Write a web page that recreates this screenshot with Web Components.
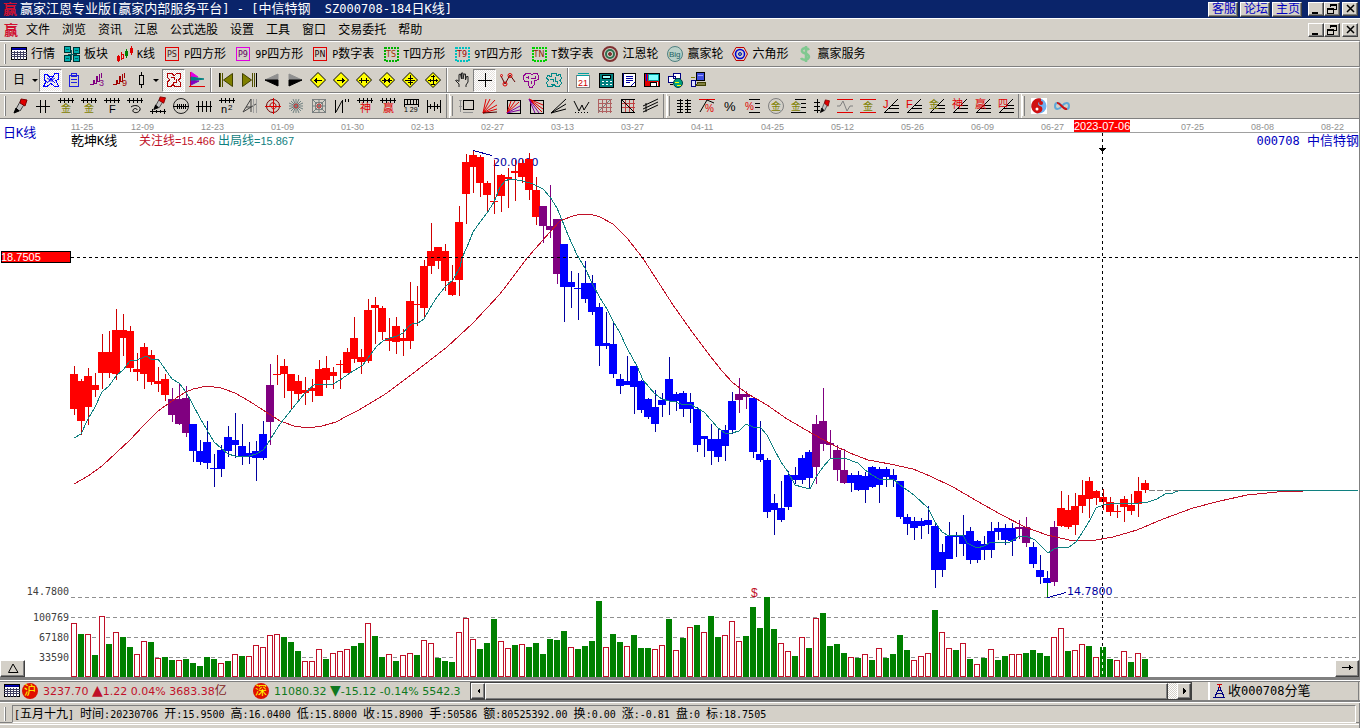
<!DOCTYPE html>
<html lang="zh-CN">
<head>
<meta charset="utf-8">
<title>赢家江恩专业版</title>
<style>
  body {
    margin: 0;
    background: #d4d0c8;
    font: 12px/14px "Liberation Sans", "Noto Sans CJK SC", sans-serif;
  }
</style>
</head>
<body>
<gann-app></gann-app>

<script>
// shared rules, every shadow root pulls these in
const base = `
  * { box-sizing: border-box; }
  i { font: 10px/14px "DejaVu Sans Mono", monospace; white-space: pre; }
  button, a { font: inherit; color: inherit; padding: 0; cursor: default; text-decoration: none; }
  svg { display: block; fill: none; stroke: #000; shape-rendering: crispEdges; overflow: visible; }
  svg text { stroke: none; fill: #000; }
  .raised {
    background: #d4d0c8;
    border: 1px solid;
    border-color: #fff #404040 #404040 #fff;
    box-shadow: inset -1px -1px #808080;
  }
`;

// latin characters take half the width of a chinese one
const half = (text) => text.replace(/[\x20-\x7e]+/g, (run) => `<i>${run}</i>`);

const p = (d, color = '#000', fill = 'none') => `<path d="${d}" stroke="${color}" fill="${fill}"/>`;
const t = (x, y, size, text, color = '#000') => `<text x="${x}" y="${y}" font-size="${size}" style="fill:${color}">${text}</text>`;
const soft = (inner) => `<g shape-rendering="geometricPrecision">${inner}</g>`;

const comb = p('M0 2.5H16M2.5 0V5M6.5 0V5M10.5 0V5M14.5 0V5');
const tag = (text, border, color, dots = '') =>
  `<rect x="1.5" y="1.5" width="13" height="13" stroke="${border}" stroke-width="${dots ? 2 : 1}" stroke-dasharray="${dots}"/>` +
  `<text x="8" y="11" text-anchor="middle" font-family="DejaVu Sans" font-size="8" style="fill:${color}">${text}</text>`;
const diamond = (arrows) => soft(p('M8 .5L15.5 8L8 15.5L.5 8Z', '#000', '#ff0')) + p(arrows);
const fan = p('M1 14.5H16M6 10.5H16M9 7.5H16') + soft(p('M1 15L15 1'));
const pen = soft(p('M4 11L9 2L13 5L8 13Z', '#404040', '#c0c0c0') + p('M9 1L15 2L13 8L8 5Z', '#800000', '#e00000') + p('M4 10L2 15L7 13Z', '#000', '#000'));
const zigzag = (color, digit) => p('M1 12.5H4.5V8.5H5.5V11.5H7.5V4.5H8.5V9.5H10.5V1.5', color) + p('M12.5 1V6', color) + t(10, 14, 9, digit, color);

const icons = {
  table: p('M.5 1.5H15.5V13.5H.5Z', '#000', '#fff') + p('M1 3H15', '#000080') + p('M1 2H15', '#0000c0') + p('M0 6.5H16M0 8.5H16M0 10.5H16M3.5 5V14M6.5 5V14M9.5 5V14M12.5 5V14', '#404060'),
  blocks: p('M.5 .5H6.5V6.5H.5ZM9.5 1.5H15.5V7.5H9.5ZM.5 9.5H6.5V15.5H.5ZM9.5 9.5H15.5V15.5H9.5Z', '#003030', '#00b0b0') + p('M2 3.5H5M11 4.5H14M2 12.5H5M11 12.5H14M7.5 4V14M4 8H13', '#006060'),
  kline: p('M1.5 9V16M4.5 6V14', '#e00000') + p('M.5 10.5H2.5V14.5H.5ZM4.5 8.5H6.5V12.5H4.5Z', '#e00000') + p('M9.5 3V12M8.5 5.5H10.5V9.5H8.5Z', '#008000', '#0a0') + p('M14.5 0V9M13.5 2.5H15.5V6.5H13.5Z', '#e00000'),
  ps: tag('PS', '#e00000', '#402020'),
  p9: tag('P9', '#e000e0', '#600060'),
  pn: tag('PN', '#e00000', '#200000'),
  ts: tag('TS', '#00b000', '#a03000', '2 1'),
  t9: tag('T9', '#00c0c0', '#a00000', '2 1'),
  tn: tag('TN', '#00d000', '#902000', '2 1'),
  rings: soft('<circle cx="8" cy="8" r="7" stroke="#803030" stroke-width="2"/><circle cx="8" cy="8" r="4" stroke="#307050" stroke-width="2"/><circle cx="8" cy="8" r="1.5" stroke="#803030" fill="#803030"/>'),
  big: soft('<circle cx="8" cy="8" r="7.5" stroke="#508080" fill="#b8d0c8"/>') + t(2, 11, 8, 'Big', '#206060'),
  hexagon: soft(p('M4 1.5H12L15.5 8L12 14.5H4L.5 8Z', '#c00000') + '<circle cx="8" cy="8" r="4.5" stroke="#0000d0" stroke-width="1.5"/><circle cx="8" cy="8" r="1.5" stroke="#0000d0" fill="#80c080"/>'),
  dollar: soft('<path d="M12 4C10 1 4 2 5 5.5C6 8 12 7 12 11C11 15 5 14 4 12M9 0V16" stroke="#80c890" stroke-width="2.5"/>'),

  wave: p('M1 2.5H4L6 4.5H10L12 1.5H15V7.5L13 8.5L15.5 14.5H12L8 11.5L4 14.5H.5L3 9.5L1 7.5Z', '#00f') + soft(p('M4 6C6 8 10 8 12 6M4 11C6 8 10 8 12 11M6 5L10 9M10 5L6 9', '#00f')),
  clipboard: p('M3.5 3.5H12.5V14.5H3.5ZM5.5 1.5H10.5V4.5H5.5ZM5 7.5H11M5 10.5H11', '#2020e0'),
  zig3: zigzag('#800080', '3'),
  zig9: zigzag('#a00000', '9'),
  candle: p('M8.5 0V3M8.5 12V16M6.5 3.5H10.5V12.5H6.5Z'),
  region: p('M2 1.5H6L8 3.5L11 1.5H14.5V6L12.5 8L14.5 11V14.5H9L7 12.5L5 14.5H1.5V10L3.5 8L1.5 5ZM5 5.5H8V8M10 6.5V10H7V12', '#b00000'),
  flag: p('M1.5 0V15M0 14.5H16', '#e00000') + soft(p('M2 0L9 5L2 5Z', '#e000e0', '#e000e0') + p('M2 5L15 7L2 9Z', '#008080', '#008080') + p('M2 9L10 9L2 13Z', '#8000c0', '#8000c0')),
  first: p('M1 1V15', '#000') + p('M2.5 1V15M4.5 1V15', '#505000') + soft(p('M14.5 1.5V14.5L5.5 8Z', '#404000', '#808000')),
  last: p('M15 1V15', '#000') + p('M11.5 1V15M13.5 1V15', '#505000') + soft(p('M1.5 1.5V14.5L10.5 8Z', '#404000', '#808000')),
  prev: soft(p('M1 8L14 2V8Z', '#909090', '#909090') + p('M1 8H14V14Z', '#000', '#000')),
  next: soft(p('M15 8L2 2V8Z', '#909090', '#909090') + p('M15 8H2V14Z', '#000', '#000')),
  left: diamond('M4 8.5H12M6.5 6V11M5.5 7V10'),
  right: diamond('M4 8.5H12M9.5 6V11M10.5 7V10'),
  wide: diamond('M3 8.5H13M5.5 6V11M10.5 6V11'),
  narrow: diamond('M3 8.5H13M6.5 7V10M9.5 7V10M5.5 6V11M10.5 6V11'),
  squeeze: diamond('M3 8.5H13M8.5 3V13M6 6.5H11M6 10.5H11'),
  expand: diamond('M3 8.5H13M8.5 3V13M6 4.5H10M6 12.5H10M5.5 7V10M11.5 7V10'),
  hand: soft(p('M5 15V12L1.5 8.5L3 8L5 9.5V2.5L6.5 2L7.5 7V1H9V7L10 2H11.5V8L12.5 4.5H14V10L12 13V15', '#202020')),
  cross: p('M8.5 1V15M1 8.5H15'),
  links: soft(p('M1 4L5 12L10 3L15 10', '#600000') + '<circle cx="10" cy="3.5" r="2" stroke="#e00000"/><circle cx="5" cy="12" r="2" stroke="#e00000"/><circle cx="1.5" cy="3.5" r="1" stroke="#e00000"/>'),
  cloud: p('M3 1.5H7L9 2.5L11 1.5H14L15.5 4V7L13 8.5H11V13L9 15.5H7L5.5 13V9.5H2L.5 7V4ZM3 5.5H6M8 6.5H12M8.5 9V12M5 3.5V7M12.5 4V7', '#900090'),
  brain: p('M6 1.5H10L11 3.5L14 2.5L15.5 6L14 8.5L15.5 11L13 14.5H10L8 12.5L6 14.5H2L.5 11L2.5 8L.5 6L2 3.5L5 4.5ZM4 7H7V10M9 5V9H12M5 12H8M11 12V10', '#008888'),
  calendar: p('M1.5 3.5H14.5V15.5H1.5Z', '#808080', '#fff') + p('M2 3H14M3 1.5H14', '#00a0a0') + t(3, 14, 9, '21', '#d00000'),
  calc: p('M1.5 1.5H15.5V15.5H1.5Z', '#000', '#008080') + p('M4.5 3.5H12.5V6.5H4.5Z', '#000', '#a0ffff') + p('M4 9.5H6M8 9.5H10M12 9.5H14M4 12.5H6M8 12.5H10M12 12.5H14', '#fff'),
  notes: p('M1.5 1.5H14.5V14.5H1.5Z', '#000', '#fff') + p('M2 1V15', '#000080') + p('M5 4.5H12M5 6.5H12M5 8.5H12M5 10.5H9', '#0000a0') + p('M10 14L14 10', '#00a'),
  disk: p('M.5 1.5H15.5V14.5H.5Z', '#000', '#e00000') + p('M4 2.5H14V8.5H4Z', '#00a0a0', '#80ffff') + p('M6 14V10.5H12V14', '#000', '#fff') + p('M13 10V14', '#fff') + p('M2.5 2V9', '#00f'),
  windows: p('M1.5 4.5H8.5V10.5H1.5ZM6.5 1.5H13.5V6.5H6.5Z', '#000080', '#fff') + soft('<circle cx="11" cy="11" r="4.5" stroke="#004040" fill="#00a080"/>') + p('M8 10H12M10 13H14', '#ff0') + p('M3 12.5H6'),
  computer: p('M6.5 .5H14.5V8.5H6.5Z', '#000', '#4050e0') + p('M1.5 8.5H5.5V14.5H1.5Z', '#000080', '#e0e0ff') + p('M8 10.5H15.5V13.5H6Z', '#404000', '#808040') + p('M1 5.5H5', '#808000') + p('M8 3H13', '#a0a0ff'),

  pencil: pen,
  ticks2: p('M1 8.5H15M5.5 2V15M10.5 2V15'),
  combGold: comb + t(3, 14, 10, '金', '#808000'),
  combF: comb + t(5, 15, 11, 'F'),
  combSpiral: comb + soft(p('M4 9C8 6 14 8 13 12C11 16 5 15 6 12C7 10 10 10 10 12')),
  penRuler: `<g transform="translate(2 -2) scale(.9)">${pen}</g>` + p('M0 13.5H16M2.5 11V16M6.5 12V15M10.5 12V15M14.5 11V16'),
  gauge: soft('<circle cx="8" cy="8" r="7.5" stroke="#202020"/>') + p('M0 8.5H16M4.5 6V11M6.5 6V11M8.5 6V11M10.5 6V11M12.5 6V11'),
  ticks4: p('M0 8.5H16M2.5 3V14M6.5 3V14M10.5 3V14M14.5 3V14'),
  combN: comb + t(2, 15, 11, 'n') + t(9, 12, 8, '2'),
  angle: soft(p('M1 14L9 1V14M4 9H9M1 14L14 6', '#404040')) + p('M11.5 1V15M14.5 1V15', '#a0a0a0'),
  target: soft('<circle cx="8" cy="8" r="6.5" stroke="#700000"/><path d="M5 8C5 3 12 4 11 9C10 12 6 11 7 9" stroke="#a00"/>') + p('M8.5 0V16M0 8.5H16', '#e00000'),
  star: soft(p('M8 1V15M1 8H15M3 3L13 13M13 3L3 13M5 1L11 15M11 1L5 15M1 5L15 11M1 11L15 5', '#708080') + '<circle cx="8" cy="8" r="2" stroke="#d03030"/>'),
  web: p('M1.5 1.5H14.5V14.5H1.5ZM4.5 4.5H11.5V11.5H4.5Z', '#808080') + soft(p('M1 1L15 15M15 1L1 15M8 1V15M1 8H15', '#708080') + '<circle cx="8" cy="8" r="2" stroke="#d03030"/>'),
  slashes: p('M1.5 2V15M8.5 2V15M11.5 1V4M14.5 1V4') + soft(p('M2 14L8 3')),
  combShen: comb + t(3, 14, 11, '神', '#e00000'),
  combYing: comb + t(3, 14, 11, '赢', '#e00000'),
  ruler: p('M1.5 9V1.5H15.5V9M1 6.5H16M4.5 2V6M7.5 2V6M10.5 2V6M13.5 2V6') + t(1, 14, 7, '1 29'),
  span: p('M1.5 2V15M14.5 2V15M8.5 4V13M2 8.5H14M4.5 6V11M11.5 6V11'),

  frame: p('M4.5 2.5H14.5V11.5H4.5Z') + p('M1.5 2V14M0 2.5H3M0 8.5H3M4 14.5H14', '#909090'),
  fanRed: soft(p('M1 15L4 1M1 15L8 1M1 15L13 2M1 15L15 7M1 15L15 11', '#e00000') + p('M1 15L15 14', '#400')),
  boxFan: p('M2.5 2.5H15.5V15.5H2.5Z') + soft(p('M2 15L6 3M2 15L10 3M2 15L14 4', '#e00000') + p('M2 15L15 8M2 15L15 12', '#8000a0')),
  boxFan2: p('M2.5 2.5H15.5V15.5H2.5Z') + soft(p('M1 1L15 7M1 1L15 11M1 1L14 14', '#e00000') + p('M1 1L7 15M1 1L11 15', '#8000a0')),
  fanBlack: soft(p('M0 15L15 1M0 15L15 6M0 15L15 11')),
  vee: soft(p('M0 3L5 13L8 7L10 12L15 4')) + '<path d="M1 14.5H15" stroke-dasharray="1 2"/>',
  gridRed: p('M1 1.5H15M1 5.5H15M1 9.5H15M1 13.5H15M1.5 1V15M5.5 1V15M9.5 1V15M13.5 1V15', '#b06060') + soft(p('M1 14L14 1', '#808080')),
  gridBlack: p('M1 5.5H15M1 9.5H15M5.5 1V15M9.5 1V15M13.5 1V15', '#c04040') + p('M1.5 1V14.5H15M1 1.5H15') + soft(p('M2 2L14 14')),
  parallel: soft(p('M0 8L15 1M0 11L15 4M0 14L15 7M3 5V14')),

  ladder: p('M4.5 1V15M11.5 1V15M1 2.5H7M1 5.5H7M1 8.5H7M1 11.5H7M1 14.5H7M9 2.5H15M9 5.5H15M9 8.5H15M9 11.5H15M9 14.5H15'),
  riseRate: p('M0 1.5H16', '#e00000') + soft(p('M1 14L8 2L15 5')) + t(6, 14, 10, '%', '#e00000'),
  rate: t(2, 13, 13, '%'),
  rateLines: p('M4 1.5H15M10 5.5H15M10 9.5H15M4 14.5H15') + t(0, 12, 10, '%', '#e00000'),
  goldCircle: soft('<circle cx="8" cy="8" r="7.5" stroke="#808080"/>') + t(3, 12, 10, '金', '#808000'),
  goldLines: p('M4 1.5H15M10 5.5H15M10 9.5H15M0 14.5H15') + t(0, 12, 10, '金', '#808000'),
  rulerPen: p('M3.5 1V15M0 4.5H6M0 8.5H6M0 12.5H6') + `<g transform="translate(5 1) scale(.7 .9)">${pen}</g>`,
  sine: p('M0 1.5H16M0 14.5H16', '#e00000') + soft(p('M0 8H3L6 3L10 13L13 8H16', '#808080')),
  goldRed: p('M0 1.5H16M0 14.5H16', '#e00000') + t(3, 12, 10, '金', '#808000'),
  fanJ: fan + t(0, 10, 11, 'J', '#e00000'),
  fanF: fan + t(0, 10, 11, 'F', '#e00000'),
  fanGold: fan + t(0, 10, 10, '金', '#808000'),
  fanShen: fan + t(0, 10, 11, '神', '#e00000'),
  fanYing: fan + t(0, 10, 11, '赢', '#e00000'),
  fanFour: fan + t(0, 9, 10, '四', '#e00000'),

  taiji: p('M0 0H16V16H0Z', 'none', '#fff') + soft('<circle cx="8" cy="8" r="7.5" stroke="none" fill="#70b0f0"/><path d="M10 .5A7.5 7.5 0 1 0 6 15.5C12 15 13 9 9 8C6 7 7 3 10 4Z" stroke="none" fill="#d01010"/><circle cx="10" cy="5" r="2" stroke="none" fill="#d01010"/><circle cx="6" cy="11" r="1.5" stroke="none" fill="#fff"/>'),
  infinity: soft('<path d="M8 8C5 4 1 4 1 8C1 12 5 12 8 8" stroke="#60a8d8" stroke-width="2"/><path d="M8 8C11 12 15 12 15 8C15 4 11 4 8 8" stroke="#60a8d8" stroke-width="2"/><path d="M3 5C6 4 9 12 13 11" stroke="#d01010" stroke-width="2"/>'),

  min: '<path d="M4 12H10" stroke-width="2"/>',
  restore: p('M6.5 6V3.5H12.5V8.5H10M6 4.5H13M3.5 7.5H9.5V12.5H3.5ZM3 8.5H10'),
  close: soft('<path d="M5 4L12 11M12 4L5 11" stroke-width="1.5"/>')
};

const glyph = (name) => `<svg width="16" height="16" viewBox="0 0 16 16" aria-hidden="true">${icons[name]}</svg>`;

class ToolButton extends HTMLElement {
  connectedCallback() {
    const icon = this.getAttribute('icon');
    const label = this.hasAttribute('wide') ? '' : `aria-label="${icon}"`;

    this.attachShadow({ mode: 'open' }).innerHTML = `
      <style>
        ${base}
        :host { display: block; width: 23px; height: 23px; }
        :host([wide]) { width: auto; margin-right: 9px; }
        :host([slim]) { width: 19px; }
        button {
          display: flex;
          align-items: center;
          justify-content: center;
          gap: 4px;
          width: 100%;
          height: 100%;
          border: 1px solid transparent;
          background: none;
          white-space: nowrap;
        }
        :host([wide]) button { border: 0; }
        :host([pressed]) button {
          border-color: #808080 #fff #fff #808080;
          background: repeating-conic-gradient(#fff 0 25%, #e4e0dc 0 50%) 0 0 / 2px 2px;
        }
      </style>
      <button ${label}>${glyph(icon)}<slot></slot></button>
    `;
  }
}
customElements.define('tool-button', ToolButton);

class ToolBar extends HTMLElement {
  connectedCallback() {
    this.attachShadow({ mode: 'open' }).innerHTML = `
      <style>
        :host {
          display: flex;
          align-items: center;
          height: 26px;
          box-sizing: border-box;
          padding-left: 4px;
          border-top: 1px solid #fff;
          border-bottom: 1px solid #808080;
          border-right: 1px solid #808080;
        }
        .grip { width: 2px; height: 20px; margin-right: 2px; border-left: 1px solid #fff; border-right: 1px solid #808080; box-sizing: border-box; }
        :host([labels]) .grip { margin-right: 5px; }
      </style>
      <div class="grip"></div>
      <slot></slot>
    `;
  }
}
customElements.define('tool-bar', ToolBar);

class WindowButtons extends HTMLElement {
  connectedCallback() {
    this.attachShadow({ mode: 'open' }).innerHTML = `
      <style>
        ${base}
        :host { display: flex; }
        button { display: flex; align-items: center; justify-content: center; width: 16px; height: 14px; }
        button:last-child { margin-left: 2px; }
        svg { flex: none; }
      </style>
      <button class="raised" aria-label="最小化">${glyph('min')}</button>
      <button class="raised" aria-label="还原">${glyph('restore')}</button>
      <button class="raised" aria-label="关闭">${glyph('close')}</button>
    `;
  }
}
customElements.define('window-buttons', WindowButtons);

class TitleBar extends HTMLElement {
  connectedCallback() {
    this.attachShadow({ mode: 'open' }).innerHTML = `
      <style>
        ${base}
        :host {
          display: flex;
          align-items: center;
          height: 18px;
          padding: 0 2px 0 3px;
          box-sizing: border-box;
          background: #0a246a;
          color: #fff;
          font-size: 13px;
          white-space: nowrap;
        }
        i { font-size: 12px; }
        b { width: 17px; color: #d01030; font-size: 14px; }
        nav { display: flex; gap: 2px; margin: 0 6px 0 auto; }
        a { width: 30px; height: 15px; line-height: 13px; padding-left: 3px; color: #0000c0; font-size: 12px; }
      </style>
      <b>赢</b>
      <span>${half('赢家江恩专业版[赢家内部服务平台] - [中信特钢  SZ000708-184日K线]')}</span>
      <nav>
        <a class="raised" href="#service">客服</a>
        <a class="raised" href="#forum">论坛</a>
        <a class="raised" href="#home">主页</a>
      </nav>
      <window-buttons></window-buttons>
    `;
  }
}
customElements.define('title-bar', TitleBar);

class MenuBar extends HTMLElement {
  connectedCallback() {
    const items = ['文件', '浏览', '资讯', '江恩', '公式选股', '设置', '工具', '窗口', '交易委托', '帮助'];
    this.attachShadow({ mode: 'open' }).innerHTML = `
      <style>
        ${base}
        :host {
          display: flex;
          align-items: center;
          gap: 12px;
          height: 23px;
          padding: 0 2px 0 4px;
          box-sizing: border-box;
          border-top: 1px solid #fff;
          border-bottom: 1px solid #808080;
        }
        b { width: 10px; color: #d01030; font-size: 14px; }
        button { border: 0; background: none; white-space: nowrap; }
        window-buttons { margin-left: auto; }
      </style>
      <b>赢</b>
      ${items.map((item) => `<button>${item}</button>`).join('')}
      <window-buttons></window-buttons>
    `;
  }
}
customElements.define('menu-bar', MenuBar);

// colour, body top, body bottom, high, low. one bar every 7px
const candles = `
r374 409 366 415,r381 421 379 435,r376 407 368 425,r385 390 373 397,r352 373 334 389,r352 373 331 378,r330 374 309 380,
r330 338 314 356,r331 368 326 372,r369 372 353 381,r347 374 343 389,r355 382 350 385,r381 384 367 392,r379 395 374 401,
p399 415 388 422,p399 424 383 425,p398 433 386 437,b424 451 424 462,b451 462 440 465,b442 463 421 469,b468 469 454 487,
b450 469 445 477,b437 451 426 457,b440 445 413 458,b446 457 424 465,b453 457 442 464,b451 458 441 481,b434 458 421 460,
p385 422 364 445,r374 375 355 385,r366 374 359 398,r374 391 374 409,r381 394 375 401,r390 393 377 405,r388 391 379 402,
r369 396 360 396,r368 380 356 388,r372 376 367 389,r364 365 360 389,r352 373 348 373,r338 359 317 363,r357 362 349 374,
r310 361 299 363,r305 308 297 344,r308 332 306 340,r338 341 318 351,r326 342 317 354,r338 341 329 356,r301 341 282 349,
r304 305 286 326,r266 308 260 319,r251 266 223 274,r247 261 247 269,r251 281 244 291,r282 295 265 296,r222 280 206 296,
r162 194 154 224,r155 167 151 193,r157 183 155 197,r183 195 181 213,r201 202 160 214,r175 196 174 212,r177 179 168 208,
r171 173 160 201,r163 177 159 183,r159 190 153 200,r190 217 177 225,p206 226 206 243,p226 230 185 238,p219 274 219 284,
b244 287 244 322,b282 287 271 308,b288 289 273 320,b283 299 261 303,b283 312 275 315,b307 346 303 366,b343 346 312 349,
b344 374 323 378,b379 386 374 394,b381 385 356 385,b366 387 366 414,b381 410 380 413,b399 417 398 419,b407 424 390 432,
b400 405 393 417,b379 401 357 415,b394 401 392 411,b393 409 391 417,b402 409 393 423,b409 445 407 452,b436 439 436 457,
b439 451 424 465,b439 457 429 462,b430 446 425 461,b401 430 392 434,p394 400 378 413,p394 397 391 409,b398 452 398 458,
b454 460 421 462,b460 512 458 518,b503 510 494 535,b508 520 481 522,b475 507 471 510,b475 480 467 484,b458 480 455 484,
b452 478 450 488,p424 467 415 484,p421 444 388 451,p443 445 430 458,p450 470 445 481,p470 483 449 484,b475 483 473 492,
b475 490 471 491,b476 490 472 503,b467 487 466 488,b469 485 467 503,b469 477 467 487,b475 480 469 487,b481 517 481 519,
b517 524 514 535,b521 528 517 540,b521 526 518 539,b520 525 506 534,b526 570 523 588,b552 570 544 577,b536 559 522 559,
b535 537 532 557,b535 544 515 556,b531 560 527 564,b541 560 540 563,b544 550 536 560,b531 550 522 558,b528 532 522 540,
b528 540 524 545,b528 541 523 556,p527 529 520 539,p527 543 517 547,b547 564 542 568,b570 577 555 584,b578 583 571 598,
p527 582 521 586,r508 526 491 527,r510 527 495 529,r506 525 493 535,r495 506 480 513,r481 499 477 518,r491 498 490 505,
r497 502 489 510,r502 512 497 516,r511 512 505 518,r499 507 496 522,r505 511 494 515,r491 504 477 517,r483 490 480 493`;

// r is an up day (hollow), g a down day, with the top of the bar
const volumes = `r623 g634 r634 g655 r616 g644 r632 g637 g647 r654 r641 g642 r658 g657 g660 r660 g659 g663 g666 g657 g659 r663 g661 r654 g656
r656 r645 r647 r635 r634 g637 g642 g651 r661 r661 r649 g659 r653 r651 r649 g646 g643 r623 g636 g657 r654 g661 r655 r653 g655
r640 r643 g658 g661 g662 r632 r618 r639 g649 g643 g619 r641 r648 g645 r644 g647 g643 g654 g639 g640 g631 r647 g649 g646 g641
g601 r647 g634 g642 r646 g635 g648 g648 r649 r645 g619 r650 g638 r627 g625 r632 g616 g637 r635 r621 r641 g636 g607 g628 g597
g629 r643 r651 g656 r637 g648 r618 g613 g646 g644 g653 r657 g658 r654 g660 r648 g658 g654 g635 g650 r660 r656 r653 g610 r632
r648 g650 r643 g659 r664 g658 r649 g660 g656 r654 r654 g653 g650 g653 g656 r637 r628 g651 r650 r644 g646 r657 g647 g659 r660
r651 g662 r653 g659`;

const fastLine = `74,438 81,434 88,419 95,407 102,392 109,386 116,376 123,370 130,361 137,360 144,357 147,356 151,359 158,359 165,369 172,379
179,383 186,392 193,405 200,418 207,430 214,442 221,448 228,454 235,456 249,456 256,454 263,450 267,445 273,435 280,424 292,409 305,393
315,384 333,384 340,380 350,373 363,365 370,355 377,346 383,341 390,338 397,336 403,333 408,327 412,324 418,323 424,319 430,308 437,297
445,287 453,280 460,267 462,258 467,247 473,232 480,222 487,213 494,202 500,187 505,181 510,179 523,181 533,184 543,189 550,197 557,208
562,220 568,235 577,255 585,268 593,285 600,298 607,309 613,321 620,333 627,348 637,366 643,380 655,394 662,399 669,401 676,402 683,405
690,404 697,408 704,412 711,420 718,428 725,433 732,433 739,431 746,424 753,427 760,427 767,435 774,449 781,462 788,472 795,485 802,487
810,489 816,477 823,467 830,459 837,458 844,458 858,463 865,470 872,475 879,479 886,480 893,479 900,485 914,495 928,508 935,522 942,532
949,536 963,535 967,543 977,548 984,546 991,542 1010,542 1018,537 1026,536 1035,540 1048,553 1054,549 1061,547 1069,547 1076,542 1082,533
1090,520 1096,508 1103,505 1117,503 1130,504 1148,502 1157,499 1165,494 1173,493 1180,490 1358,490`;

const slowLine = `74,484 88,476 102,466 116,453 130,440 144,425 158,411 172,401 179,396 186,392 193,389 207,386 221,388 235,393 249,401 263,410
280,421 294,426 308,428 322,426 336,422 347,416 359,410 387,393 420,368 447,347 473,323 500,294 528,257 550,232 560,221 570,217 580,214
590,214 600,217 613,224 627,238 642,257 655,277 673,305 690,329 707,352 722,371 733,383 748,394 767,405 787,419 813,434 833,445 850,453
868,460 890,464 913,469 930,476 953,487 977,501 1000,514 1025,527 1047,535 1069,540 1090,541 1113,537 1137,530 1163,519 1193,508 1220,501
1247,495 1277,492 1303,491`;

const dates = {
  71: '11-25', 131: '12-09', 201: '12-23', 271: '01-09', 341: '01-30', 411: '02-13', 481: '02-27', 551: '03-13', 621: '03-27',
  691: '04-11', 761: '04-25', 831: '05-12', 901: '05-26', 971: '06-09', 1041: '06-27', 1181: '07-25', 1251: '08-08', 1321: '08-22'
};

class StockChart extends HTMLElement {
  drawCandles() {
    const colors = { r: '#f00', b: '#00f', p: '#800080' };
    const wicks = { r: '#d00000', b: '#0000a0', p: '#800080' };
    return candles.trim().split(',').map((row, i) => {
      const item = row.trim();
      const [top, bottom, high, low] = item.slice(1).split(' ').map(Number);
      const x = 74 + i * 7;
      return `<path d="M${x}.5 ${high}V${low}" stroke="${wicks[item[0]]}"/>` +
        `<rect x="${x - 4}" y="${top}" width="8" height="${bottom - top}" fill="${colors[item[0]]}" stroke="none"/>`;
    }).join('');
  }

  drawVolumes() {
    return volumes.trim().split(/\s+/).map((item, i) => {
      const top = Number(item.slice(1));
      const x = 71 + i * 7;
      return item[0] === 'r'
        ? `<rect x="${x}.5" y="${top}.5" width="5" height="${676 - top}" stroke="#c01028" fill="#fff"/>`
        : `<rect x="${x}" y="${top}" width="6" height="${677 - top}" fill="#008000" stroke="none"/>`;
    }).join('');
  }

  connectedCallback() {
    const levels = [597, 617, 637, 657];
    this.attachShadow({ mode: 'open' }).innerHTML = `
      <style>
        ${base}
        :host { display: block; position: relative; flex: 1; min-height: 0; background: #fff; overflow: hidden; }
        svg { width: 100%; height: 100%; }
        .date { font-size: 9px; fill: #909090; }
        .big { font-size: 13px; }
        .half { font: 12px "DejaVu Sans Mono", monospace; }
        .small { font-size: 11px; }
        .axis { font: 10px "DejaVu Sans Mono", monospace; fill: #404040; text-anchor: end; }
        .mark { font: 11px "DejaVu Sans", sans-serif; fill: #0000a0; }
        button { position: absolute; bottom: 0; height: 17px; }
        button svg { margin: auto; width: 14px; height: 12px; }
        .up { left: 0; width: 25px; }
        .go { right: 1px; width: 24px; }
      </style>
      <svg viewBox="0 119 1360 558" preserveAspectRatio="xMinYMax meet" role="img" aria-label="日K线">
        <path d="M71 132.5H1358" stroke="#a0a0a0"/>
        ${Object.entries(dates).map(([x, date]) => `<text class="date" x="${x}" y="130">${date}</text>`).join('')}
        ${levels.map((y) => `<path d="M71 ${y}.5H1358" stroke="#909090" stroke-dasharray="4 3"/>`).join('')}

        <text class="axis" x="69" y="595">14.7800</text>
        <text class="axis" x="69" y="621">100769</text>
        <text class="axis" x="69" y="641">67180</text>
        <text class="axis" x="69" y="661">33590</text>

        <text class="mark" x="493" y="166">20.0000</text>
        <path d="M473 150.5L492 155.5M1048 597.5L1066 592.5" stroke="#0000a0"/>
        ${this.drawCandles()}
        <path d="M1047.5 583V597" stroke="#008000"/>
        ${this.drawVolumes()}
        <polyline points="${slowLine}" stroke="#c01028"/>
        <polyline points="${fastLine}" stroke="#108080"/>
        <path d="M1149 490.5H1180" stroke="#808080" stroke-dasharray="6 2"/>
        <text class="mark" x="1067" y="595">14.7800</text>
        <text x="751" y="597" font-size="12" style="fill:#c01028">$</text>

        <path d="M71 257.5H1358M1102.5 133V646" stroke-dasharray="3 3"/>
        <path d="M1102.5 647V677" stroke="#fff" stroke-dasharray="3 3"/>
        <path d="M1099 148H1106L1102.5 152Z" fill="#000" stroke="none"/>
        <rect x="1074" y="120" width="56" height="12" fill="#f00" stroke="none"/>
        <text class="small" x="1074" y="130" style="fill:#fff">2023-07-06</text>
        <rect x="1.5" y="251.5" width="69" height="11" fill="#f00"/>
        <text class="small" x="1" y="261" style="fill:#fff">18.7505</text>

        <text class="big" x="3" y="137" style="fill:#0000c0">日<tspan class="half">K</tspan>线</text>
        <text class="big" x="71" y="145">乾坤<tspan class="half">K</tspan>线</text>
        <text x="139" y="145" font-size="12" style="fill:#c01028">关注线<tspan class="small">=15.466</tspan></text>
        <text x="218" y="145" font-size="12" style="fill:#108080">出局线<tspan class="small">=15.867</tspan></text>
        <text class="big" x="1359" y="145" text-anchor="end" style="fill:#0000c0; white-space: pre"><tspan class="half">000708 </tspan>中信特钢</text>
        <path d="M1359.5 119V677" stroke="#808080"/>
      </svg>
      <button class="raised up" aria-label="展开"><svg viewBox="0 0 14 12"><path d="M2.5 9.5H12L7 1Z" shape-rendering="geometricPrecision"/></svg></button>
      <button class="raised go" aria-label="前进"><svg viewBox="0 0 14 12"><path d="M2 4.5H13M9.5 2V7M10.5 3V6"/></svg></button>
    `;
  }
}
customElements.define('stock-chart', StockChart);

class QuoteTicker extends HTMLElement {
  connectedCallback() {
    this.attachShadow({ mode: 'open' }).innerHTML = `
      <style>
        ${base}
        :host {
          display: flex;
          height: 26px;
          border-top: 3px solid #808080;
          box-sizing: border-box;
          box-shadow: inset 0 1px #fff, inset 0 2px #808080, inset 0 -1px #fff, inset 0 -3px #808080;
          white-space: nowrap;
        }
        :host > * { margin: 2px 0 3px; }
        .quotes {
          display: flex;
          align-items: center;
          width: 470px;
          padding-left: 4px;
          overflow: hidden;
          font: 11px/14px "DejaVu Sans", "Noto Sans CJK SC", sans-serif;
        }
        .quotes span, .quotes svg { flex: none; }
        .up { width: 208px; color: #c01028; }
        .down { color: #107820; }
        .arrow { font-size: 14px; line-height: 12px; }
        em { font-style: normal; font-size: 12px; color: #802020; }
        .quotes .market {
          width: 16px;
          margin: 0 5px 0 2px;
          border-radius: 8px;
          background: #e01000;
          color: #ff0;
          font-size: 12px;
          line-height: 16px;
          text-align: center;
        }
        .bar { display: flex; flex: 1; border: 1px solid #404040; margin-right: 16px; }
        .bar button { width: 14px; }
        .bar svg { margin: auto; }
        input {
          flex: 1;
          min-width: 0;
          margin: 0;
          appearance: none;
          background: repeating-conic-gradient(#fff 0 25%, #d4d0c8 0 50%) 0 0 / 2px 2px;
        }
        input::-webkit-slider-thumb {
          appearance: none;
          width: calc(100% - 9px);
          height: 17px;
          background: #d4d0c8;
          border: 1px solid;
          border-color: #fff #404040 #404040 #fff;
          box-shadow: inset -1px -1px #808080;
        }
        .tick {
          display: flex;
          align-items: center;
          gap: 3px;
          width: 151px;
          margin-right: 1px;
          padding-left: 3px;
          border-left: 2px solid #fff;
          border-right: 1px solid #808080;
          font-size: 13px;
        }
        .tick i { font-size: 12px; }
      </style>
      <div class="quotes">
        ${glyph('table')}
        <span class="market">沪</span>
        <span class="up">3237.70 <span class="arrow">▲</span>1.22 0.04% 3683.38<em>亿</em></span>
        <span class="market">深</span>
        <span class="down">11080.32 <span class="arrow">▼</span>-15.12 -0.14% 5542.3</span>
      </div>
      <div class="bar">
        <button class="raised" aria-label="向左"><svg width="8" height="8"><path d="M6 1V7L3 4Z" fill="#000" stroke="none"/></svg></button>
        <input type="range" value="0" aria-label="滚动">
        <button class="raised" aria-label="向右"><svg width="8" height="8"><path d="M3 1V7L6 4Z" fill="#000" stroke="none"/></svg></button>
      </div>
      <div class="tick">
        <svg width="12" height="16"><path d="M6.5 3L2 14M6.5 3L11 14M0 14.5H12M4 10.5H9M5 7.5H8" stroke="#000080"/><path d="M6.5 1V5M4 1.5H9" stroke="#d00000"/></svg>
        <span>${half('收000708分笔')}</span>
      </div>
    `;
  }
}
customElements.define('quote-ticker', QuoteTicker);

class StatusBar extends HTMLElement {
  connectedCallback() {
    const line = '[五月十九] 时间:20230706 开:15.9500 高:16.0400 低:15.8000 收:15.8900 手:50586 额:80525392.00 换:0.00 涨:-0.81 盘:0 标:18.7505';
    this.attachShadow({ mode: 'open' }).innerHTML = `
      <style>
        ${base}
        :host {
          display: block;
          height: 25px;
          padding: 2px 3px 0 4px;
          box-sizing: border-box;
          border-right: 1px solid #808080;
          box-shadow: inset 0 -3px #d4d0c8, inset 0 -4px #fff, inset 0 -5px #d4d0c8, inset 0 -6px #808080;
        }
        div { display: flex; align-items: center; height: 18px; white-space: nowrap; }
        .grip { width: 2px; height: 14px; border-left: 1px solid #fff; border-right: 1px solid #808080; }
        p { flex: 1; margin: 0 0 0 6px; height: 18px; line-height: 16px; padding-left: 1px; border: 1px solid; border-color: #808080 #fff #fff #808080; }
      </style>
      <div><span class="grip"></span><p>${half(line)}</p></div>
    `;
  }
}
customElements.define('status-bar', StatusBar);

class GannApp extends HTMLElement {
  connectedCallback() {
    const views = [
      ['table', '行情'], ['blocks', '板块'], ['kline', 'K线'], ['ps', 'P四方形'], ['p9', '9P四方形'], ['pn', 'P数字表'], ['ts', 'T四方形'],
      ['t9', '9T四方形'], ['tn', 'T数字表'], ['rings', '江恩轮'], ['big', '赢家轮'], ['hexagon', '六角形'], ['dollar', '赢家服务']
    ];
    const pressed = ['wave', 'region', 'cross'];
    const group = (names) => names.split(' ').map((name) =>
      `<tool-button icon="${name}" ${pressed.includes(name) ? 'pressed' : ''} ${name === 'candle' ? 'slim' : ''}></tool-button>`).join('');
    const drop = '<button class="drop" aria-label="更多"></button>';
    const split = '<span class="split"></span>';
    const handle = '<span class="handle"></span>';

    this.attachShadow({ mode: 'open' }).innerHTML = `
      <style>
        ${base}
        :host { display: flex; flex-direction: column; height: 100vh; min-width: 1100px; }
        title-bar, menu-bar, tool-bar, quote-ticker, status-bar { flex: none; }
        .day { width: 22px; border: 0; background: none; }
        .drop { width: 12px; height: 20px; border: 0; background: none; }
        .day + .drop { width: 9px; }
        .drop::before { content: ""; display: block; width: 0; margin: auto; border: 3px solid transparent; border-top-color: #000; border-bottom: 0; }
        .split { width: 2px; height: 24px; margin: 0 2px; border-left: 1px solid #808080; border-right: 1px solid #fff; }
        .handle { width: 10px; height: 24px; display: flex; align-items: center; justify-content: space-between; padding: 0 2px 0 1px; }
        .handle::before { content: ""; width: 2px; height: 24px; border-left: 1px solid #808080; border-right: 1px solid #fff; }
        .handle::after { content: ""; width: 2px; height: 20px; border-left: 1px solid #fff; border-right: 1px solid #808080; }
      </style>
      <title-bar></title-bar>
      <menu-bar></menu-bar>
      <tool-bar labels>
        ${views.map(([icon, label]) => `<tool-button wide icon="${icon}"><span>${half(label)}</span></tool-button>`).join('')}
      </tool-bar>
      <tool-bar>
        <button class="day">日</button>${drop}
        ${group('wave clipboard zig3 zig9 candle')}${drop}
        ${group('region flag')}${split}
        ${group('first last prev next left right wide narrow squeeze expand')}${split}
        ${group('hand cross links cloud brain')}${split}
        ${group('calendar calc notes disk windows computer')}
      </tool-bar>
      <tool-bar>
        ${group('pencil ticks2 combGold combGold combF combSpiral penRuler gauge ticks4 combN angle target star web slashes combShen combYing ruler span')}${handle}
        ${group('frame fanRed boxFan boxFan2 fanBlack vee gridRed gridBlack parallel')}${handle}
        ${group('ladder riseRate rate rateLines goldCircle goldLines rulerPen sine goldRed fanJ fanF fanGold fanShen fanYing fanFour')}${handle}
        ${group('taiji infinity')}
      </tool-bar>
      <stock-chart></stock-chart>
      <quote-ticker></quote-ticker>
      <status-bar></status-bar>
    `;
  }
}
customElements.define('gann-app', GannApp);
</script>
</body>
</html>
